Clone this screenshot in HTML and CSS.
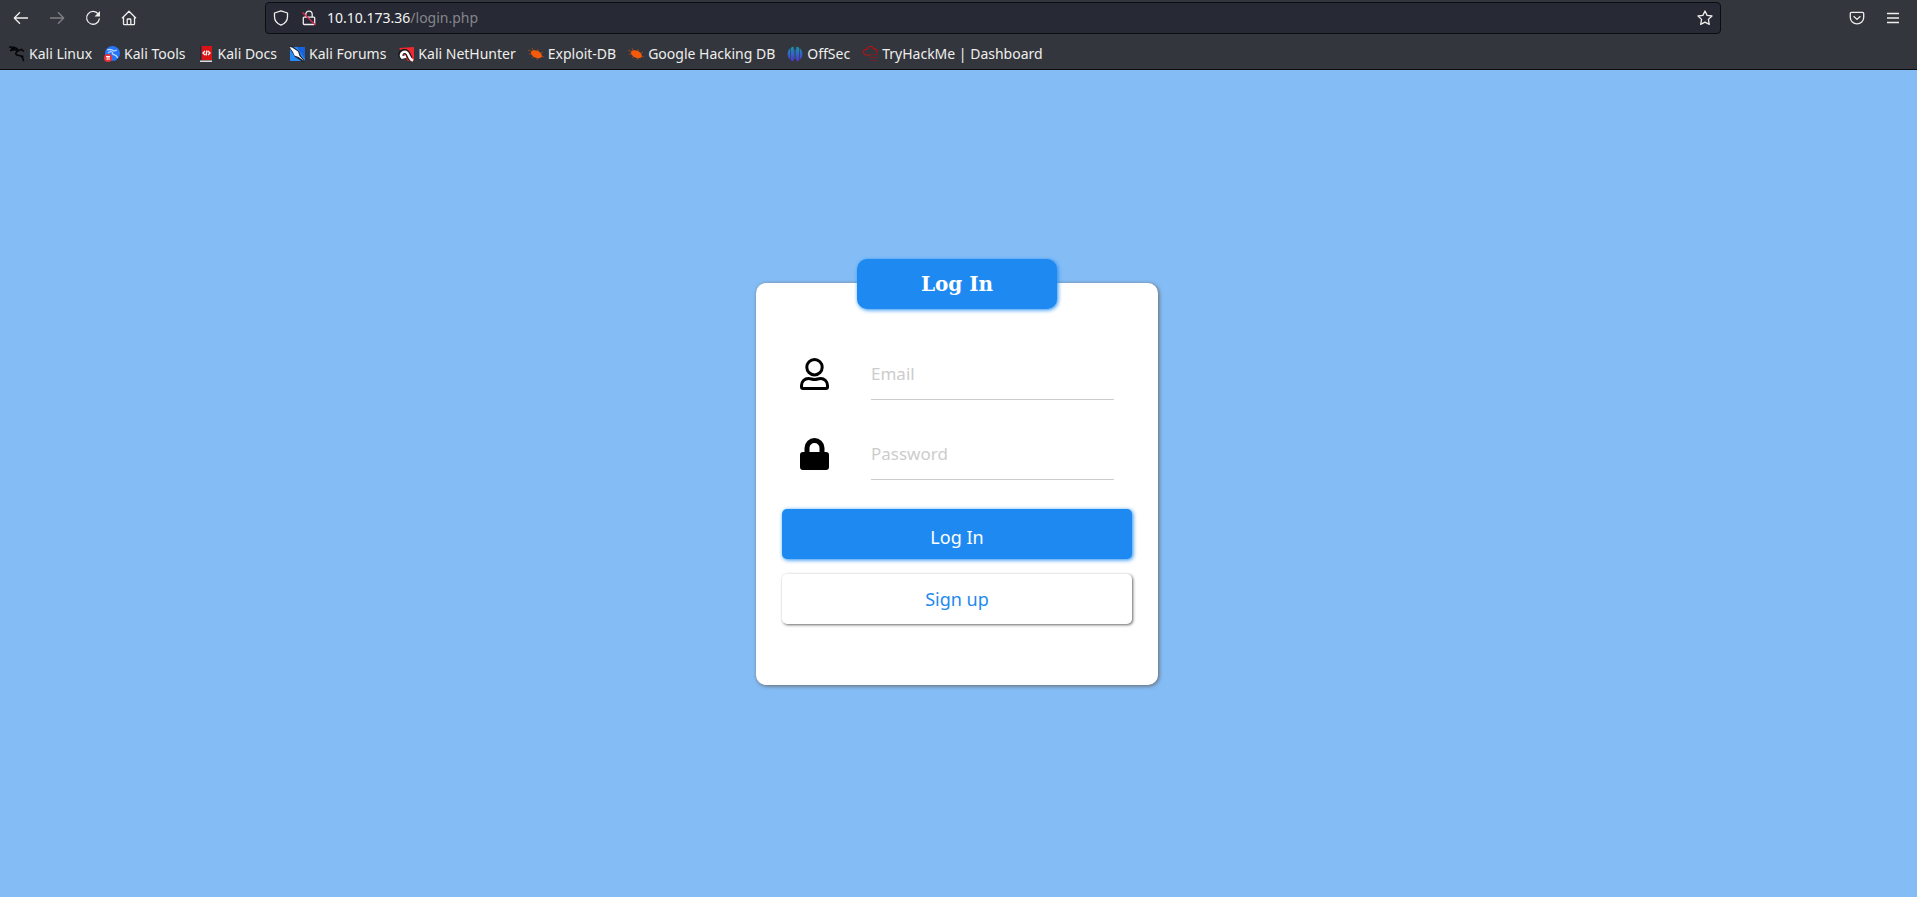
FILE: index.html
```html
<!DOCTYPE html>
<html lang="en">
<head>
<meta charset="utf-8">
<title>Log In</title>
<link rel="stylesheet" href="styles.css">
</head>
<body>
<div class="browser">
  <header class="chrome">
    <div class="toolbar">
      <nav class="nav-buttons" aria-label="Navigation">
        <button class="tool" aria-label="Back"><svg viewBox="0 0 16 16"><path d="M15 8H1.500M7 2.200L1.300 8 7 13.800"/></svg></button>
        <button class="tool" aria-label="Forward" disabled><svg viewBox="0 0 16 16"><path d="M1 8h13.500M9 2.200L14.700 8 9 13.800"/></svg></button>
        <button class="tool" aria-label="Reload"><svg viewBox="0 0 16 16"><path d="M13.300 4.200A6.400 6.400 0 1 0 14.400 8.500"/><path class="solid" d="M15 1v5.500H9.500z"/></svg></button>
        <button class="tool" aria-label="Home"><svg viewBox="0 0 16 16"><path d="M1 8.200L8 1.300l7 6.900M2.500 7v6.800q0 .9.900.9h9.200q.9 0 .9-.9V7M6.200 14.500V9.800q0-.8.800-.8h2q.8 0 .8.800v4.700"/></svg></button>
      </nav>
      <div class="urlbar">
        <button class="tool" aria-label="Tracking protection"><svg viewBox="0 0 16 16"><path d="M8 .8L14.500 3v3.700c0 3.700-2.500 6.800-6.500 8.500C4 13.500 1.500 10.400 1.500 6.700V3z"/></svg></button>
        <button class="tool" aria-label="Connection is not secure"><svg viewBox="0 0 16 16"><path d="M4.800 7V4.300a3.200 3.200 0 0 1 6.400 0V7M3.200 7.200h9.600q.9 0 .9.900v5.500q0 .9-.9.900H3.200q-.9 0-.9-.9V8.100q0-.9.900-.9z"/><path class="slash" d="M1.500 2.500L14.500 15"/></svg></button>
        <div class="address"><span class="host">10.10.173.36</span>/login.php</div>
        <button class="tool" aria-label="Bookmark this page"><svg viewBox="0 0 16 16"><path d="M8 1l2.100 4.400 4.900.6-3.600 3.400.9 5L8 12.100l-4.300 2.300.9-5L1 6l4.900-.6z"/></svg></button>
      </div>
      <div class="end-buttons">
        <button class="tool" aria-label="Pocket"><svg viewBox="0 0 16 16"><path d="M2.500 2.300h11q1.200 0 1.200 1.200v4a6.700 6.300 0 0 1-13.400 0v-4q0-1.200 1.200-1.200zM4.600 6.200L8 9.400l3.400-3.200"/></svg></button>
        <button class="tool" aria-label="Menu"><svg viewBox="0 0 16 16"><path d="M2 3.500h12M2 8h12M2 12.500h12"/></svg></button>
      </div>
    </div>
    <nav class="bookmarks" aria-label="Bookmarks">
      <a href="#"><svg viewBox="0 0 16 16"><path fill="none" stroke="#050608" stroke-width="1.600" d="M0 1.200c4-.6 7 .3 8.800 2.300M1 4.800C4 3.300 7 3.200 9.500 4.700l3-1.200 2.500 2M9.500 4.700C6 6 6 9 9 9.200c4 .2 5.300 2.300 5.600 6M10 9.500l4.500 1M2 3l4-.8"/></svg>Kali Linux</a>
      <a href="#"><svg viewBox="0 0 16 16"><circle cx="8.500" cy="7.500" r="7.500" fill="#2575f6"/><path fill="none" stroke="#b9d7ff" stroke-width="1.300" d="M3 4c3-1 5-.5 7 1l3-1M4 7c3-2.500 5-1 4.500.5S13 8 13.500 12"/><circle cx="4" cy="12" r="4" fill="#e93238"/><path fill="none" stroke="#fff" d="M2 10.500h4M3.200 10.500V14M5 10.500V14"/></svg>Kali Tools</a>
      <a href="#"><svg viewBox="0 0 16 16"><path fill="#d91417" d="M2 0h12v14H2z"/><path fill="#20283b" d="M2 0h1.500v14H2z"/><path fill="#ddd" d="M2 14.500h12V16H2z"/><path fill="none" stroke="#fff" stroke-width="1.300" d="M7 5L5 7l2 2M10 5l2 2-2 2M9 4.500l-1 5"/></svg>Kali Docs</a>
      <a href="#"><svg viewBox="0 0 16 16"><path fill="#278bfa" d="M1 1h15v14H1z"/><path fill="#1761df" d="M8 1h8v12z"/><path fill="#20242c" d="M0 1l3-1 7 5 2 5 4 5-2 1-8-5-3-5z"/><path fill="#fff" d="M.5 1L3 1.500l6 4 1.500 4.500L15 15l-5.500-4L5.500 9.500 4 6z"/></svg>Kali Forums</a>
      <a href="#"><svg viewBox="0 0 16 16"><path fill="#ef292f" d="M1 2L16 1v14H10z"/><path fill="none" stroke="#15171c" stroke-width="5" d="M13 13C10 11 11 6 7 5.500S1 9 4.500 12"/><path fill="none" stroke="#fff" stroke-width="2.600" d="M15 14.500C10 13 11.500 7 8 6S1.500 8.500 4 11.500l4-1"/></svg>Kali NetHunter</a>
      <a href="#"><svg viewBox="0 0 16 16"><path fill="none" stroke="#a94b20" stroke-width=".8" d="M0 4l5 2M4 2l2 4M1 8h5M4 12l3-3M10 3v4M15 6l-4 2M16 11l-4-1M9 14l1-3"/><ellipse cx="8.500" cy="8" rx="5.800" ry="3.600" fill="#f35b0b" transform="rotate(25 8 8)"/></svg>Exploit-DB</a>
      <a href="#"><svg viewBox="0 0 16 16"><path fill="none" stroke="#a94b20" stroke-width=".8" d="M0 4l5 2M4 2l2 4M1 8h5M4 12l3-3M10 3v4M15 6l-4 2M16 11l-4-1M9 14l1-3"/><ellipse cx="8.500" cy="8" rx="5.800" ry="3.600" fill="#f35b0b" transform="rotate(25 8 8)"/></svg>Google Hacking DB</a>
      <a href="#"><svg viewBox="0 0 16 16"><defs><linearGradient id="offsec" x2="0" y2="1"><stop stop-color="#1399b5"/><stop offset="1" stop-color="#5331d3"/></linearGradient></defs><circle cx="8" cy="8" r="7.500" fill="url(#offsec)"/><path fill="#33363d" d="M6.500 0h3L8.800 8l.7 8h-3l.7-8z"/><path stroke="#33363d" stroke-width=".6" d="M3.500 2v12M12.500 2v12"/><path stroke="#2b6dc4" stroke-width="1" d="M8 3v10"/></svg>OffSec</a>
      <a href="#"><svg viewBox="0 0 16 16"><path fill="none" stroke="#b51218" stroke-width="1.200" d="M9 9H3.500a3 3 0 0 1-.5-5.500h2C6-.5 11-.5 11.500 3c3-.5 4 2 3.300 4"/><path fill="none" stroke="#8e171d" d="M11 8.500h5M7 11.500h4M12 11.500h3M9 14.500h3M13 14.500h2"/></svg>TryHackMe | Dashboard</a>
    </nav>
  </header>
  <main class="page">
    <form class="card">
      <h1 class="card-title">Log In</h1>
      <div class="field">
        <label for="email" aria-label="Email"><svg viewBox="0 0 29 32"><path fill="none" stroke="#000" stroke-width="3" d="M14.500 1.500a7.700 7.700 0 1 1 0 15.400 7.700 7.700 0 0 1 0-15.400zM8.500 20.500c2.500 0 3.200 1 6 1s3.500-1 6-1c4 0 7 3 7 7V29q0 1.500-1.500 1.500H3Q1.500 30.500 1.500 29v-1.500c0-4 3-7 7-7z"/></svg></label>
        <input id="email" type="text" placeholder="Email">
      </div>
      <div class="field">
        <label for="password" aria-label="Password"><svg viewBox="0 0 29 32"><path d="M3 14h1.500v-4a10 10 0 0 1 20 0v4H26q3 0 3 3v12q0 3-3 3H3q-3 0-3-3V17q0-3 3-3zm6.500 0h10v-4a5 5 0 0 0-10 0z"/></svg></label>
        <input id="password" type="password" placeholder="Password">
      </div>
      <button class="action primary" type="button">Log In</button>
      <button class="action secondary" type="button">Sign up</button>
    </form>
  </main>
</div>
</body>
</html>
```
FILE: styles.css
```css
* { box-sizing: border-box; }
body {
  margin: 0;
  background: #fff;
  font-family: "Noto Sans", sans-serif;
}
button, input { font: inherit; }
.browser {
  display: flex;
  flex-direction: column;
  min-height: 100vh;
  margin-right: 2px;
}
.chrome {
  background: #33363d;
  border-bottom: 1px solid #0c0d10;
  color: #eeeeec;
}
.toolbar {
  display: flex;
  align-items: center;
  gap: 128px;
  height: 36px;
  padding: 0 16px 0 13px;
}
.nav-buttons, .end-buttons {
  display: flex;
  flex: none;
  gap: 20px;
}
.tool {
  display: flex;
  flex: none;
  padding: 0;
  border: 0;
  background: none;
  color: #eeeeec;
}
.tool:disabled { opacity: 0.4; }
.tool svg {
  width: 16px;
  height: 16px;
  fill: none;
  stroke: currentColor;
  stroke-width: 1.3;
  stroke-linejoin: round;
}
.tool .solid { fill: currentColor; stroke: none; }
.tool .slash { stroke: #e22850; }
.urlbar {
  display: flex;
  flex: 1;
  align-items: center;
  gap: 12px;
  height: 32px;
  padding: 0 7px;
  border: 1px solid #0c0d10;
  border-radius: 4px;
  background: #272935;
}
.address {
  flex: 1;
  margin-left: -2px;
  font-size: 14px;
  line-height: 20px;
  color: #85868b;
}
.host { color: #f3f3f2; }
.bookmarks {
  display: flex;
  align-items: center;
  gap: 12px;
  height: 33px;
  padding: 2px 9px 0;
}
.bookmarks a {
  display: flex;
  align-items: center;
  gap: 4px;
  color: inherit;
  font-size: 14px;
  line-height: 20px;
  text-decoration: none;
  white-space: nowrap;
}
.bookmarks svg { width: 16px; height: 16px; }
.page {
  display: grid;
  flex: 1;
  place-items: center;
  padding-right: 3px;
  background: #84bdf6;
}
.card {
  display: flex;
  flex-direction: column;
  width: 402px;
  padding: 0 26px 61px;
  border-radius: 10px;
  background: #fff;
  box-shadow: 1px 1px 4px #666;
}
.card-title {
  align-self: center;
  width: 200px;
  margin: -24px 0 25px;
  border-radius: 10px;
  background: #1e8af1;
  box-shadow: 1px 1px 4px #1e8af1;
  color: #fff;
  font: bold 20px/50px "DejaVu Serif", serif;
  text-align: center;
}
.field {
  display: flex;
  align-items: center;
  gap: 42px;
  height: 80px;
  padding: 0 18px;
}
.field label { display: flex; flex: none; }
.field svg { width: 29px; height: 32px; }
.field input {
  width: 100%;
  min-width: 0;
  height: 52px;
  padding: 0;
  border: 0;
  border-bottom: 1px solid #ccc;
  background: none;
  font-size: 17px;
}
.field input::placeholder { color: #ccc; opacity: 1; }
.action {
  height: 50px;
  margin-top: 15px;
  padding: 0;
  border: 0;
  border-radius: 5px;
  font-size: 18px;
}
.primary {
  padding-top: 6px;
  background: #1e8af1;
  box-shadow: 1px 1px 4px #1e8af1;
  color: #fff;
}
.secondary {
  background: #fff;
  box-shadow: 1px 1px 3px #666;
  color: #1e8af1;
}
```
